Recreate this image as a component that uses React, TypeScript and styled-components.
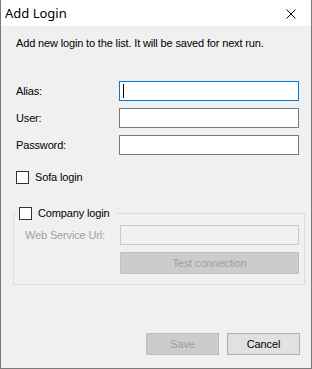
import styled, { createGlobalStyle } from "styled-components";

const GlobalStyle = createGlobalStyle`
  html, body {
    margin: 0;
    padding: 0;
    background: #ffffff;
  }
  * {
    box-sizing: border-box;
  }
`;

const App = () => {
  return (
    <>
      <GlobalStyle />
      <Window>
        <TitleBar>
          <Title>Add Login</Title>
          <CloseButton>
            <svg width="10" height="10" viewBox="0 0 10 10">
              <path d="M0.5 0.5 L9.5 9.5 M9.5 0.5 L0.5 9.5" stroke="#000" strokeWidth="1" fill="none" />
            </svg>
          </CloseButton>
        </TitleBar>

        <Body>
          <Intro>Add new login to the list. It will be saved for next run.</Intro>

          <FormGrid>
            <Label>Alias:</Label>
            <TextBox focused>
              <Caret />
            </TextBox>
            <Label>User:</Label>
            <TextBox />
            <Label>Password:</Label>
            <TextBox />
          </FormGrid>

          <CheckRow>
            <CheckBox />
            <CheckText>Sofa login</CheckText>
          </CheckRow>

          <GroupBox>
            <GroupLegend>
              <CheckBox />
              <CheckText>Company login</CheckText>
            </GroupLegend>
            <GroupGrid>
              <Label disabled>Web Service Url:</Label>
              <TextBox disabled />
              <span />
              <Button disabled wide>Test connection</Button>
            </GroupGrid>
          </GroupBox>

          <Footer>
            <Button disabled>Save</Button>
            <Button>Cancel</Button>
          </Footer>
        </Body>
      </Window>
    </>
  );
};

//Styled components

const Window = styled.div`
  width: 312px;
  height: 369px;
  display: flex;
  flex-direction: column;
  border: 1px solid #7a7a7a;
  border-top: none;
  font-family: "Liberation Sans", Arial, sans-serif;
  font-size: 11px;
  letter-spacing: -0.15px;
  color: #000;
`;

const TitleBar = styled.div`
  height: 26px;
  background: #fff;
  display: flex;
  align-items: center;
  justify-content: space-between;
  padding-left: 4px;
  flex-shrink: 0;
`;

const Title = styled.span`
  font-family: "Noto Sans", "Open Sans", sans-serif;
  font-size: 13px;
  letter-spacing: 0;
  line-height: 16px;
  margin-top: -1px;
`;

const CloseButton = styled.div`
  width: 46px;
  height: 26px;
  display: flex;
  align-items: center;
  justify-content: center;
  margin-right: -1px;
  padding-top: 1px;
  padding-left: 3px;
`;

const Body = styled.div`
  flex: 1;
  background: #f0f0f0;
  display: flex;
  flex-direction: column;
  padding: 11px 11px 13px 15px;
`;

const Intro = styled.div`
  line-height: 13px;
  margin-bottom: 31px;
`;

const FormGrid = styled.div`
  display: grid;
  grid-template-columns: 103px 180px;
  row-gap: 7px;
  align-items: center;
`;

const Label = styled.span<{ disabled?: boolean }>`
  color: ${(p) => (p.disabled ? "#a0a0a0" : "#000")};
  line-height: 13px;
`;

const TextBox = styled.div<{ focused?: boolean; disabled?: boolean }>`
  height: 20px;
  background: ${(p) => (p.disabled ? "#f0f0f0" : "#fff")};
  border: 1px solid
    ${(p) => (p.focused ? "#0078d7" : p.disabled ? "#cccccc" : "#7a7a7a")};
  display: flex;
  align-items: center;
  padding-left: 3px;
`;

const Caret = styled.span`
  width: 1px;
  height: 14px;
  background: #000;
`;

const CheckRow = styled.div`
  display: flex;
  align-items: center;
  margin-top: 16px;
`;

const CheckBox = styled.span`
  width: 13px;
  height: 13px;
  border: 1px solid #333;
  background: #fff;
  flex-shrink: 0;
`;

const CheckText = styled.span`
  margin-left: 6px;
  line-height: 13px;
`;

const GroupBox = styled.fieldset`
  margin: 23px -5px 0 -3px;
  padding: 5px 0 10px 11px;
  border: 1px solid #dcdcdc;
  min-width: 0;
`;

const GroupLegend = styled.legend`
  display: flex;
  align-items: center;
  margin-left: -7px;
  padding: 0 8px 0 1px;
  line-height: 14px;
`;

const GroupGrid = styled.div`
  display: grid;
  grid-template-columns: 95px 179px;
  row-gap: 7px;
  align-items: center;
`;

const Button = styled.div<{ disabled?: boolean; wide?: boolean }>`
  width: ${(p) => (p.wide ? "179px" : "73px")};
  height: 22px;
  display: flex;
  align-items: center;
  justify-content: center;
  background: ${(p) => (p.disabled ? "#cccccc" : "#e1e1e1")};
  border: 1px solid ${(p) => (p.disabled ? "#bfbfbf" : "#adadad")};
  color: ${(p) => (p.disabled ? "#a0a0a0" : "#000")};
`;

const Footer = styled.div`
  margin-top: auto;
  display: flex;
  justify-content: flex-end;
  gap: 8px;
`;

export default App;
